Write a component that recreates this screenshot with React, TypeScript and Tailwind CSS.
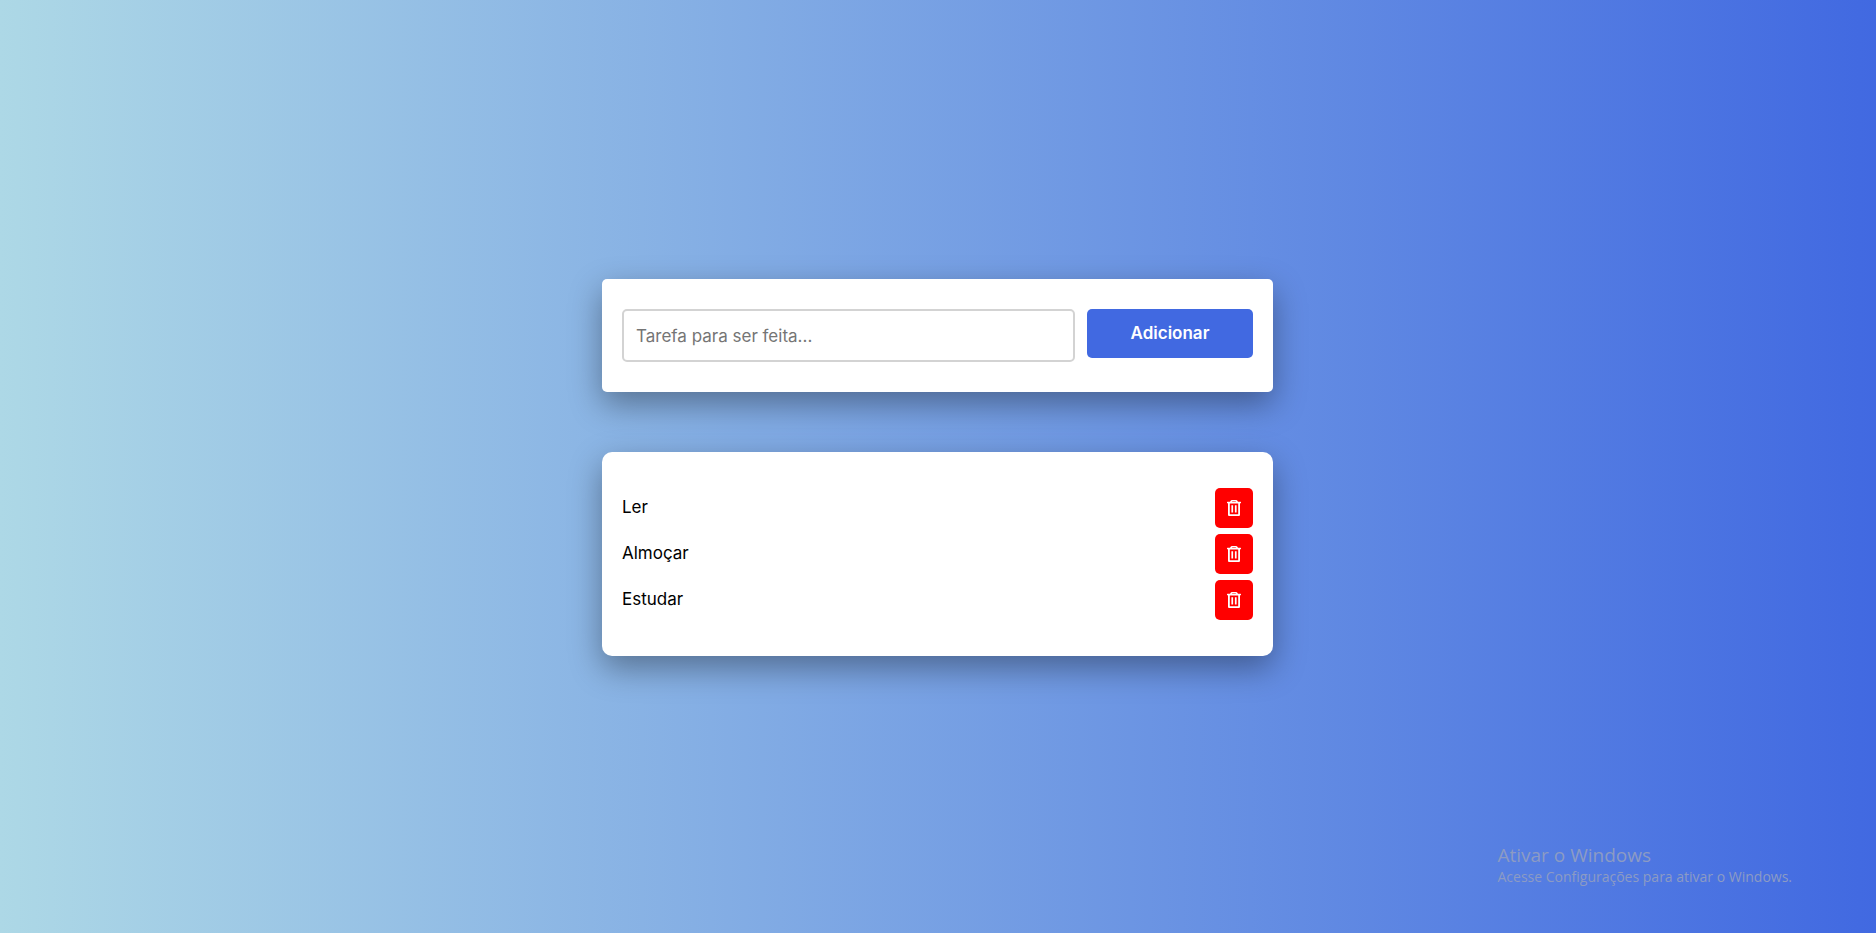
import { useState, type FormEvent } from "react";

function TrashIcon() {
  return (
    <svg viewBox="0 0 14 16" width="14" height="16" fill="currentColor" aria-hidden="true">
      <path
        fillRule="evenodd"
        d="M4.9 0h4.2c.5 0 .9.2 1.1.6l.8 1.2h2.6c.2 0 .4.2.4.4v.7c0 .2-.2.4-.4.4H13v11.4c0 .7-.6 1.3-1.3 1.3H2.300C1.600 16 1 15.400 1 14.700V3.300H.4c-.2 0-.4-.2-.4-.4v-.7c0-.2.2-.4.4-.4H3L3.800.6C4 .2 4.400 0 4.900 0zM5.300 1.300l-.3.500h4l-.3-.500zM2.800 3.500v10.700h8.400V3.500z"
      />
      <path d="M4.400 5.200h1.700v7.300H4.400zM7.900 5.200h1.700v7.300H7.900z" />
    </svg>
  );
}

export default function App() {
  const [tasks, setTasks] = useState(["Ler", "Almoçar", "Estudar"]);
  const [draft, setDraft] = useState("");

  const addTask = (event: FormEvent) => {
    event.preventDefault();
    const name = draft.trim();
    if (!name) return;
    setTasks([...tasks, name]);
    setDraft("");
  };

  return (
    <div className="relative flex min-h-screen flex-col items-center justify-center bg-[linear-gradient(to_right,#add8e6,#4169e1)] pt-[34px] pr-[17px] pb-8 pl-4 font-['Inter','Noto_Sans',sans-serif]">
      <main className="flex w-full max-w-[671px] flex-col gap-[60px]">
        <form
          onSubmit={addTask}
          className="flex items-start gap-3 rounded-[5px] bg-white px-5 py-[30px] shadow-[0_12px_32px_rgba(0,0,0,0.36)]"
        >
          <input
            type="text"
            aria-label="Tarefa"
            placeholder="Tarefa para ser feita..."
            value={draft}
            onChange={(event) => setDraft(event.target.value)}
            className="h-[53px] min-w-0 flex-1 rounded-[5px] border-2 border-[#d3d3d3] px-3 text-[17px] text-black outline-none placeholder:text-[#757575] focus:border-[#4169e1]"
          />
          <button
            type="submit"
            className="h-[49px] w-[166px] cursor-pointer rounded-[5px] bg-[#4169e1] text-[17px] font-semibold text-white"
          >
            Adicionar
          </button>
        </form>

        <ul className="flex flex-col gap-1.5 rounded-[10px] bg-white px-5 py-9 shadow-[0_12px_32px_rgba(0,0,0,0.36)]">
          {tasks.map((task, index) => (
            <li key={index} className="flex items-center justify-between">
              <span className="text-[17px] text-black">{task}</span>
              <button
                type="button"
                aria-label={`Remover ${task}`}
                onClick={() => setTasks(tasks.filter((_, i) => i !== index))}
                className="flex h-10 w-[38px] cursor-pointer items-center justify-center rounded-[5px] bg-[#ff0000] text-base text-white"
              >
                <TrashIcon />
              </button>
            </li>
          ))}
        </ul>
      </main>

      <aside className="absolute right-[84px] bottom-[46px] font-['Open_Sans','Noto_Sans',sans-serif] text-[#8c9bc4]">
        <p className="text-[19px] leading-6">Ativar o Windows</p>
        <p className="text-sm leading-5">Acesse Configurações para ativar o Windows.</p>
      </aside>
    </div>
  );
}
